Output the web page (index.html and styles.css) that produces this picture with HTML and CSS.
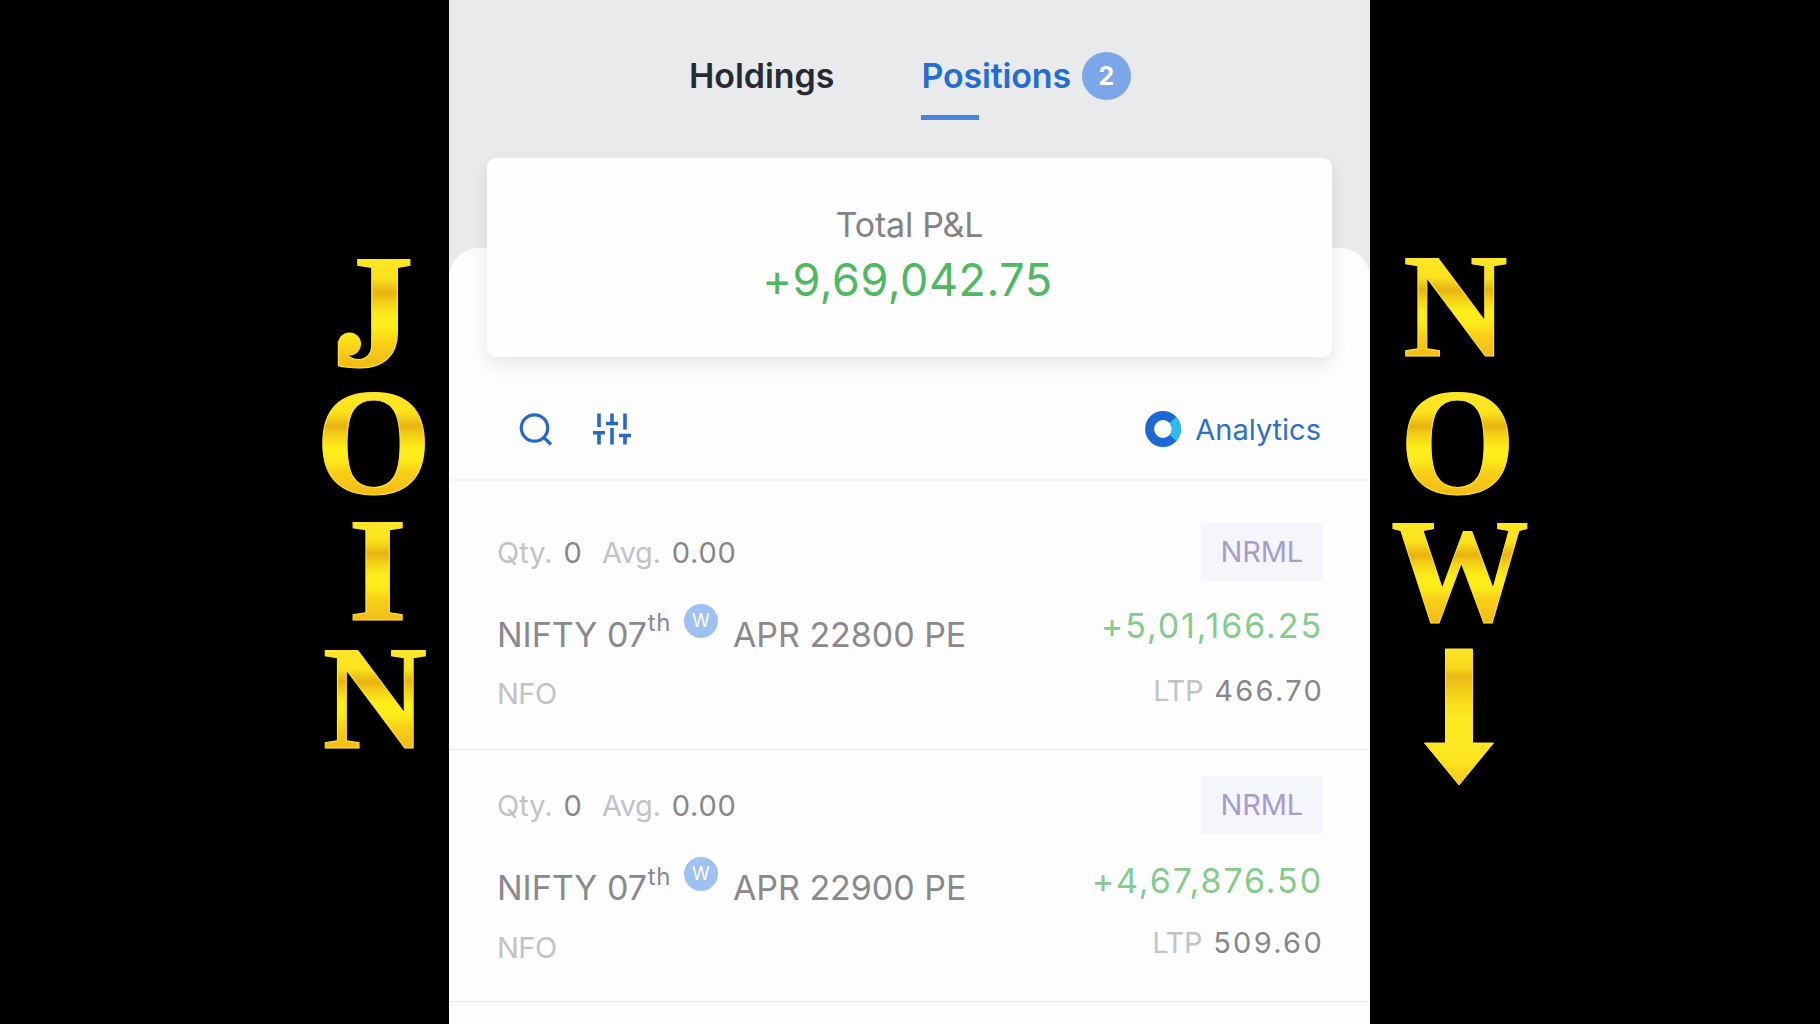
FILE: index.html
```
<!DOCTYPE html>
<html lang="en">
<head>
<meta charset="utf-8">
<title>Positions</title>
<link rel="stylesheet" href="styles.css">
</head>
<body>
<div class="stage">
  <aside class="side">
    <svg class="banner" viewBox="0 0 449 1024" width="449" height="1024">
      <defs>
        <linearGradient id="gold" gradientUnits="userSpaceOnUse" x1="0" y1="-97" x2="0" y2="2">
          <stop offset="0" stop-color="#fde725"/>
          <stop offset=".2" stop-color="#fbe31c"/>
          <stop offset=".33" stop-color="#e8b212"/>
          <stop offset=".43" stop-color="#f5d416"/>
          <stop offset=".55" stop-color="#fef01a"/>
          <stop offset=".66" stop-color="#fdea1a"/>
          <stop offset=".78" stop-color="#f8cf18"/>
          <stop offset="1" stop-color="#f2b918"/>
        </linearGradient>
        <linearGradient id="gold-ball" x1="0" y1="0" x2="0" y2="1">
          <stop offset="0" stop-color="#fdea1a"/>
          <stop offset="1" stop-color="#f6c818"/>
        </linearGradient>
        <linearGradient id="gold-arrow" gradientUnits="userSpaceOnUse" x1="0" y1="-98" x2="0" y2="38">
          <stop offset="0" stop-color="#fde725"/>
          <stop offset=".14" stop-color="#f6d81c"/>
          <stop offset=".2" stop-color="#e9b814"/>
          <stop offset=".36" stop-color="#f5d81b"/>
          <stop offset=".5" stop-color="#fcea22"/>
          <stop offset=".8" stop-color="#fde61f"/>
          <stop offset="1" stop-color="#f5c41a"/>
        </linearGradient>
      </defs>
      <g class="letters">
        <text transform="translate(331 365.500) scale(1.15 1.13)">J</text>
        <circle class="ball" cx="349.500" cy="344" r="11.500"/>
        <text transform="translate(315.500 493.500) scale(1.03 1.05)">O</text>
        <text transform="translate(348 620) scale(1.05 1.03)">I</text>
        <text transform="translate(322.500 747.500) scale(1 1.02)">N</text>
      </g>
    </svg>
  </aside>

  <main class="panel">
    <nav class="tabs">
      <div class="tab"><div class="tab-label">Holdings</div></div>
      <div class="tab active">
        <div class="tab-label"><span>Positions</span><span class="count">2</span></div>
        <div class="underline"></div>
      </div>
    </nav>

    <section class="sheet">
      <div class="summary">
        <div class="summary-title">Total P&amp;L</div>
        <div class="summary-value">+9,69,042.75</div>
      </div>

      <div class="toolbar">
        <svg class="search" viewBox="0 0 40 40" width="40" height="40"><circle cx="18.500" cy="19" r="13.200"/><path d="M27.800 28.300L35 35.500"/></svg>
        <svg class="filter" viewBox="0 0 40 34" width="40" height="34"><path d="M7 1.500V15M1 20.700H13M7 20.700V32.500M20 1.500V11.500M14 11.500H26M20 16V32.500M33 1.500V17.500M27 23.500H39M33 23.500V32.500"/></svg>
        <a class="analytics">
          <svg viewBox="0 0 36 36" width="36" height="36"><circle cx="18" cy="18" r="13.400" stroke="#1d68d2"/><path d="M27.900 9A13.400 13.400 0 0 1 27.900 27" stroke="#2fbcec"/></svg>
          <span>Analytics</span>
        </a>
      </div>

      <article class="position first">
        <div class="left">
          <div class="qty"><span class="muted">Qty.</span><span class="num">0</span><span class="muted avg">Avg.</span><span class="num dec">0.00</span></div>
          <div class="name"><span>NIFTY 07</span><span class="sup">th</span><span class="week">W</span><span>APR 22800 PE</span></div>
          <div class="exchange muted">NFO</div>
        </div>
        <div class="right">
          <div class="product">NRML</div>
          <div class="pnl">+5,01,166.25</div>
          <div class="ltp"><span class="muted">LTP</span><span class="price">466.70</span></div>
        </div>
      </article>

      <article class="position second">
        <div class="left">
          <div class="qty"><span class="muted">Qty.</span><span class="num">0</span><span class="muted avg">Avg.</span><span class="num dec">0.00</span></div>
          <div class="name"><span>NIFTY 07</span><span class="sup">th</span><span class="week">W</span><span>APR 22900 PE</span></div>
          <div class="exchange muted">NFO</div>
        </div>
        <div class="right">
          <div class="product">NRML</div>
          <div class="pnl">+4,67,876.50</div>
          <div class="ltp"><span class="muted">LTP</span><span class="price">509.60</span></div>
        </div>
      </article>
    </section>
  </main>

  <aside class="side">
    <svg class="banner" viewBox="1370 0 450 1024" width="450" height="1024">
      <g class="letters">
        <text transform="translate(1403 355.500) scale(1 1.02)">N</text>
        <text transform="translate(1399.500 493.500) scale(1.03 1.05)">O</text>
        <text transform="translate(1391 620.500) scale(.952 1.02)">W</text>
        <path class="arrow" transform="translate(1459 747)" d="M-13.500 -98H13.500V-4H34.500L0 38L-34.500 -4H-13.500Z"/>
      </g>
    </svg>
  </aside>
</div>
</body>
</html>
```
FILE: styles.css
```
* { box-sizing: border-box; }
body { margin: 0; background: #000; font-family: Inter, "Liberation Sans", sans-serif; overflow: hidden; }
.stage { display: flex; width: 1820px; height: 1024px; background: #000; }
.side { flex: 1; }
.banner { display: block; }
.letters { font: 700 145px "Liberation Serif", serif; fill: url(#gold); stroke: #ffe436; stroke-width: 1; }
.ball { fill: url(#gold-ball); stroke: none; }
.arrow { fill: url(#gold-arrow); }
.panel { width: 921px; height: 1024px; background: #e9eaec; display: flex; flex-direction: column; overflow: hidden; }

.tabs { display: flex; gap: 87px; height: 247.5px; padding: 50px 0 0 240px; flex: none; }
.tab-label { display: flex; align-items: center; height: 51px; font-size: 34px; font-weight: 600; line-height: 50px; letter-spacing: -.05px; color: #282a31; }
.active .tab-label { color: #246dd2; letter-spacing: -.17px; }
.count { width: 49px; height: 48px; margin-left: 11px; border-radius: 50%; background: #7ba6e9; color: #fff; font-size: 25px; font-weight: 700; line-height: 49px; text-align: center; letter-spacing: 0; }
.underline { width: 58px; height: 5px; margin-top: 14px; background: #4684e0; }

.sheet { flex: 1; background: #fdfdfe; border-radius: 30px 30px 0 0; }
.summary { height: 199px; margin: -89.5px 38px 0; padding-top: 46.5px; border-radius: 9px; background: #fefefe; box-shadow: 0 8px 18px rgba(0,0,0,.09); text-align: center; }
.summary-title { font-size: 34px; line-height: 40px; letter-spacing: -.23px; color: #828287; }
.summary-value { margin-top: 10px; padding-right: 4px; font-size: 45px; line-height: 50px; letter-spacing: .5px; color: #50b763; }

.toolbar { display: flex; align-items: center; height: 123.5px; padding: 23px 49px 0 67px; border-bottom: 2px solid #f2f2f3; }
.toolbar svg { fill: none; }
.search, .filter { stroke: #2a69bf; stroke-width: 3.2; }
.filter { stroke-width: 3.6; margin-left: 36px; }
.analytics { display: flex; align-items: center; gap: 14px; margin-left: auto; font-size: 29px; color: #2f6fc4; }
.analytics svg { stroke-width: 9; }

.position { display: flex; justify-content: space-between; padding: 0 47px 0 49px; border-bottom: 1.5px solid #e9e9eb; font-size: 29px; line-height: 40px; color: #848489; }
.first { height: 269px; padding-top: 42px; }
.second { height: 252px; padding-top: 26.5px; }
.left { padding-top: 10px; }
.muted { color: #c2c2c7; }
.exchange { margin-left: -1px; letter-spacing: -.5px; }
.qty { display: flex; height: 40px; margin-left: -1px; }
.num { margin-left: 11px; color: #86868b; }
.avg { margin-left: 20px; letter-spacing: -.3px; }
.dec { letter-spacing: .8px; }
.name { display: flex; align-items: center; height: 44px; margin: 40px 0 17.5px -1px; font-size: 34px; line-height: 44px; letter-spacing: -.03px; color: #89898e; white-space: nowrap; }
.sup { margin: 0 0 23px 1px; font-size: 24px; line-height: 30px; letter-spacing: .5px; }
.week { width: 34px; height: 34px; margin: 0 15px 28px 13px; border-radius: 50%; background: #9dc1f0; color: #fff; font-size: 18px; line-height: 34px; text-align: center; }
.right { display: flex; flex-direction: column; align-items: flex-end; }
.product { width: 121.5px; height: 58px; margin-right: .5px; background: #f5f5fc; color: #aa9bcf; line-height: 58px; text-align: center; letter-spacing: -.1px; }
.pnl { margin: 23.5px 0 23px; font-size: 34px; line-height: 44px; letter-spacing: 1.9px; color: #84cc8b; }
.second .pnl { margin-top: 25px; margin-bottom: 19.5px; }
.ltp { display: flex; margin-right: -1px; }
.ltp .muted { letter-spacing: -.3px; }
.price { margin-left: 11px; letter-spacing: 2.3px; color: #86868b; }
```
